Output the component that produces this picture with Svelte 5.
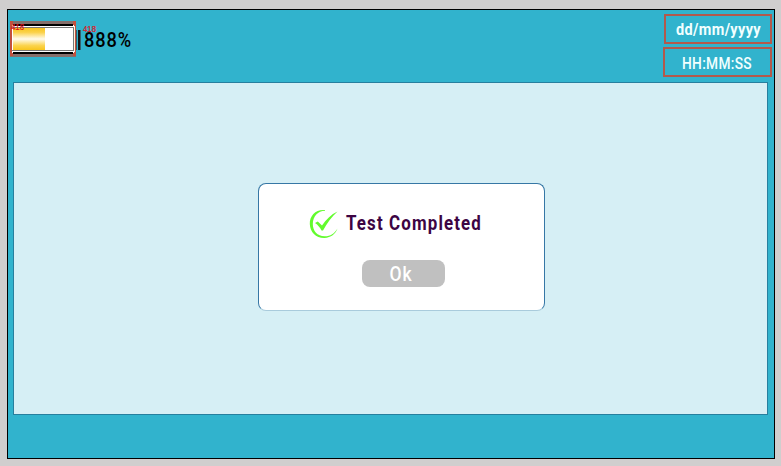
<script>
  const date = 'dd/mm/yyyy';
  const time = 'HH:MM:SS';
  const level = '888%';
  const tag = '418';
  const message = 'Test Completed';
</script>

<div class="desktop">
  <main class="screen">
    <header>
      <div class="power">
        <svg width="126" height="38" viewBox="10 20 126 38" shape-rendering="crispEdges">
          <defs>
            <linearGradient id="charge" x1="0" y1="0" x2="0" y2="1">
              <stop offset="0" stop-color="#f8c51c" />
              <stop offset="0.2" stop-color="#fbd24b" />
              <stop offset="0.5" stop-color="#fffbed" />
              <stop offset="0.8" stop-color="#fbd34c" />
              <stop offset="1" stop-color="#f8c51c" />
            </linearGradient>
          </defs>
          <rect x="10" y="21" width="66" height="36" fill="#866f6b" />
          <rect x="12" y="24" width="62" height="30" fill="#fff" />
          <rect x="13" y="24" width="60" height="2" fill="#000" />
          <rect x="13" y="52" width="60" height="2" fill="#000" />
          <rect x="12" y="27" width="62" height="24" fill="#777" />
          <rect x="12" y="28" width="61" height="22" fill="#fff" />
          <rect x="13" y="28" width="32" height="22" fill="url(#charge)" />
          <path d="M11 21v35M75 21v35" stroke="#c3503d" stroke-width="2" />
          <rect x="74" y="26" width="1" height="26" fill="#fff3dc" />
          <path d="M10 21h3v4h-3zM73 21h3v4h-3zM10 53h3v3h-3zM73 53h3v3h-3z" fill="#c3503d" />
          <rect x="76" y="30" width="1" height="20" fill="#345d68" />
          <rect x="78" y="30" width="2" height="20" fill="#101416" />
          <rect x="80" y="30" width="1" height="20" fill="#35616d" />
          <text class="level" x="84" y="47" textLength="48" lengthAdjust="spacingAndGlyphs">{level}</text>
          <text class="tag" x="11" y="30" textLength="13" lengthAdjust="spacingAndGlyphs">{tag}</text>
          <text class="tag" x="83" y="32" textLength="13" lengthAdjust="spacingAndGlyphs">{tag}</text>
        </svg>
      </div>
      <div class="clock">
        <div class="field date">
          <svg width="90" height="26" viewBox="0 0 90 26">
            <text x="3" y="19" textLength="85" lengthAdjust="spacingAndGlyphs">{date}</text>
          </svg>
        </div>
        <div class="field">
          <svg width="90" height="26" viewBox="0 0 90 26">
            <text class="light" x="9" y="20" textLength="70" lengthAdjust="spacingAndGlyphs">{time}</text>
          </svg>
        </div>
      </div>
    </header>

    <section class="panel">
      <div class="dialog" role="alertdialog" aria-label={message}>
        <div class="message">
          <svg class="check" width="30" height="32" viewBox="308 208 30 32">
            <path
              d="M325 210C316 209 309.500 215.500 309.800 224C310 232 316 238.200 324.500 238C331 237.500 335.500 234 337.500 228.500C334.500 233.500 330.500 236.300 325 236.300C317.500 236.500 312.800 231 312.800 224C312.800 216.500 318 211 325 210.800Z"
            />
            <path d="M315 223L317.800 221.500L322 225.500C326 219.500 331 214.500 337.500 211.500C331.500 217 327 223 323 230.500H321.500C320 227.500 318 225 315 223Z" />
          </svg>
          <svg width="140" height="32" viewBox="346 208 140 32">
            <text class="title" x="346" y="230" textLength="136" lengthAdjust="spacingAndGlyphs">{message}</text>
          </svg>
        </div>
        <button type="button">
          <svg width="83" height="27" viewBox="362 260 83 27">
            <text class="ok" x="389.500" y="281" textLength="23" lengthAdjust="spacingAndGlyphs">Ok</text>
          </svg>
        </button>
      </div>
    </section>
  </main>
</div>

<style>
  .desktop {
    box-sizing: border-box;
    width: 781px;
    height: 466px;
    padding: 9px 6px 7px 7px;
    background: #d0cece;
    font-family: Roboto, "Liberation Sans", sans-serif;
  }
  .screen {
    box-sizing: border-box;
    width: 768px;
    height: 450px;
    border: 1px solid #000;
    background: #31b3cd;
  }
  header {
    display: flex;
    justify-content: space-between;
    box-sizing: border-box;
    height: 72px;
    padding: 4px 2px 0 2px;
  }
  svg {
    display: block;
    overflow: visible;
  }
  .power {
    padding-top: 6px;
  }
  .clock {
    display: flex;
    flex-direction: column;
    align-items: flex-end;
    gap: 3px;
  }
  .field {
    box-sizing: border-box;
    width: 109px;
    height: 30px;
    border: 2px solid #b3594b;
    display: flex;
    justify-content: center;
  }
  .date {
    width: 108px;
  }
  .field text {
    font-size: 17px;
    font-weight: 700;
    letter-spacing: 0.4px;
    fill: #f2ffff;
  }
  .field .light {
    font-weight: 500;
  }
  .level {
    font-size: 21px;
    font-weight: 500;
    letter-spacing: 1px;
    fill: #000;
  }
  .tag {
    font-family: "Liberation Sans", sans-serif;
    font-size: 9px;
    font-weight: 400;
    fill: #e0101a;
    stroke: #e0101a;
    stroke-width: 0.2px;
  }
  .panel {
    box-sizing: border-box;
    width: 755px;
    height: 333px;
    margin-left: 5px;
    border: 1px solid #277f9e;
    background: #d6eff5;
    padding: 100px 0 0 244px;
  }
  .dialog {
    box-sizing: border-box;
    width: 287px;
    height: 128px;
    border: 1px solid #3677a5;
    border-bottom-color: #a9cbdc;
    border-radius: 8px;
    background: #fff;
    padding: 24px 0 0 49px;
  }
  .message {
    display: flex;
    gap: 8px;
  }
  .check {
    fill: #62fb2d;
  }
  .title {
    font-size: 21px;
    font-weight: 700;
    letter-spacing: 1.4px;
    fill: #3d0443;
  }
  button {
    display: block;
    width: 83px;
    height: 27px;
    margin: 20px 0 0 54px;
    padding: 0;
    border: 0;
    border-radius: 8px;
    background: #c0c0c0;
  }
  .ok {
    font-family: Roboto, "Liberation Sans", sans-serif;
    font-size: 20px;
    font-weight: 500;
    letter-spacing: 1px;
    fill: #fff;
  }
</style>
